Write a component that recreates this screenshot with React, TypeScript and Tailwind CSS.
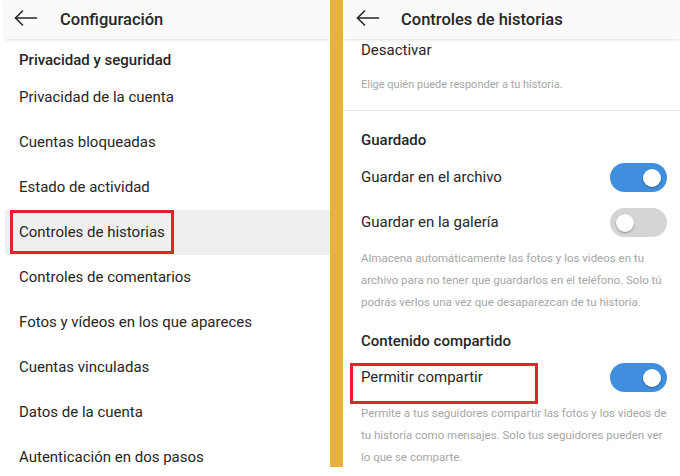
import React from 'react';

const font = { fontFamily: 'Roboto, "Noto Sans", sans-serif' };

const BackArrow: React.FC = () => (
  <svg width="24" height="16" viewBox="0 0 24 16" fill="none" stroke="#262626" strokeWidth={1.6} strokeLinecap="round" strokeLinejoin="round" aria-hidden="true">
    <path d="M1.5 8h21" />
    <path d="M8.5 1L1.5 8l7 7" />
  </svg>
);

const Header: React.FC<{ title: string; titleLeft: string; arrowLeft: string }> = ({ title, titleLeft, arrowLeft }) => (
  <div className="relative z-10 h-[39px] bg-[#fafafa] shadow-[0_1px_3px_rgba(0,0,0,0.12)] flex items-center">
    <div className={`absolute top-[10px] ${arrowLeft}`}>
      <BackArrow />
    </div>
    <span className={`absolute ${titleLeft} text-[16.5px] font-medium text-[#262626] leading-[39px]`}>{title}</span>
  </div>
);

const Toggle: React.FC<{ on: boolean }> = ({ on }) => (
  <div className={`w-[57px] h-[29px] rounded-full flex items-center px-[6px] ${on ? 'bg-[#3f8fde] justify-end' : 'bg-[#d5d5d5] justify-start'}`}>
    <div className="w-[18px] h-[18px] rounded-full bg-white shadow-[0_1px_2px_rgba(0,0,0,0.35)]" />
  </div>
);

const menu = [
  'Privacidad de la cuenta',
  'Cuentas bloqueadas',
  'Estado de actividad',
  'Controles de historias',
  'Controles de comentarios',
  'Fotos y vídeos en los que apareces',
  'Cuentas vinculadas',
  'Datos de la cuenta',
  'Autenticación en dos pasos',
];

export default function App() {
  return (
    <div className="w-[680px] h-[476px] bg-white flex overflow-hidden text-[#262626]" style={font}>
      {/* Left screen */}
      <div className="w-[330px] pl-[5px] h-[476px] overflow-hidden">
        <Header title="Configuración" titleLeft="left-[55px]" arrowLeft="left-[9px]" />
        <div className="h-[36px] pl-[14px] pt-[10px] text-[15px] font-medium leading-[22px]">Privacidad y seguridad</div>
        {menu.map((item) => {
          const active = item === 'Controles de historias';
          return (
            <div
              key={item}
              className={`relative h-[45px] pl-[14px] flex items-center text-[15px] ${active ? 'bg-[#efefef]' : ''}`}
            >
              {item}
              {active && (
                <div className="absolute left-[5px] top-0 w-[164px] h-[44px] border-[3px] border-[#e3222b]" />
              )}
            </div>
          );
        })}
      </div>

      {/* Divider bar */}
      <div className="w-[13px] h-[467px] bg-[#e6b23a]" />

      {/* Right screen */}
      <div className="w-[337px] h-[467px] overflow-hidden">
        <Header title="Controles de historias" titleLeft="left-[401px] ml-[-343px]" arrowLeft="left-[13px]" />
        <div className="pl-[18px] pr-[13px]">
          <div className="text-[15px] leading-[22px]">Desactivar</div>
          <div className="mt-[13px] text-[11px] leading-[22px] text-[#a6a6a6]">Elige quién puede responder a tu historia.</div>
        </div>
        <div className="mt-[14px] border-t border-[#e6e6e6]" />
        <div className="pl-[18px] pr-[13px]">
          <div className="mt-[18px] text-[15px] font-medium leading-[22px]">Guardado</div>
          <div className="mt-[4px] h-[45px] flex items-center justify-between text-[15px]">
            <span>Guardar en el archivo</span>
            <Toggle on />
          </div>
          <div className="h-[45px] flex items-center justify-between text-[15px]">
            <span>Guardar en la galería</span>
            <Toggle on={false} />
          </div>
          <p className="mt-[2px] text-[11.5px] leading-[22px] text-[#a6a6a6]">
            Almacena automáticamente las fotos y los videos en tu archivo para no tener que guardarlos en el teléfono. Solo tú podrás verlos una vez que desaparezcan de tu historia.
          </p>
          <div className="mt-[17px] text-[15px] font-medium leading-[22px]">Contenido compartido</div>
          <div className="relative mt-[3px] h-[45px] flex items-center justify-between text-[15px]">
            <span>Permitir compartir</span>
            <Toggle on />
            <div className="absolute left-[-11px] top-[8px] w-[188px] h-[41px] border-[3px] border-[#e3222b]" />
          </div>
          <p className="mt-[2px] text-[11.5px] leading-[22px] text-[#a6a6a6]">
            Permite a tus seguidores compartir las fotos y los videos de tu historia como mensajes. Solo tus seguidores pueden ver lo que se comparte.
          </p>
        </div>
      </div>
    </div>
  );
}
